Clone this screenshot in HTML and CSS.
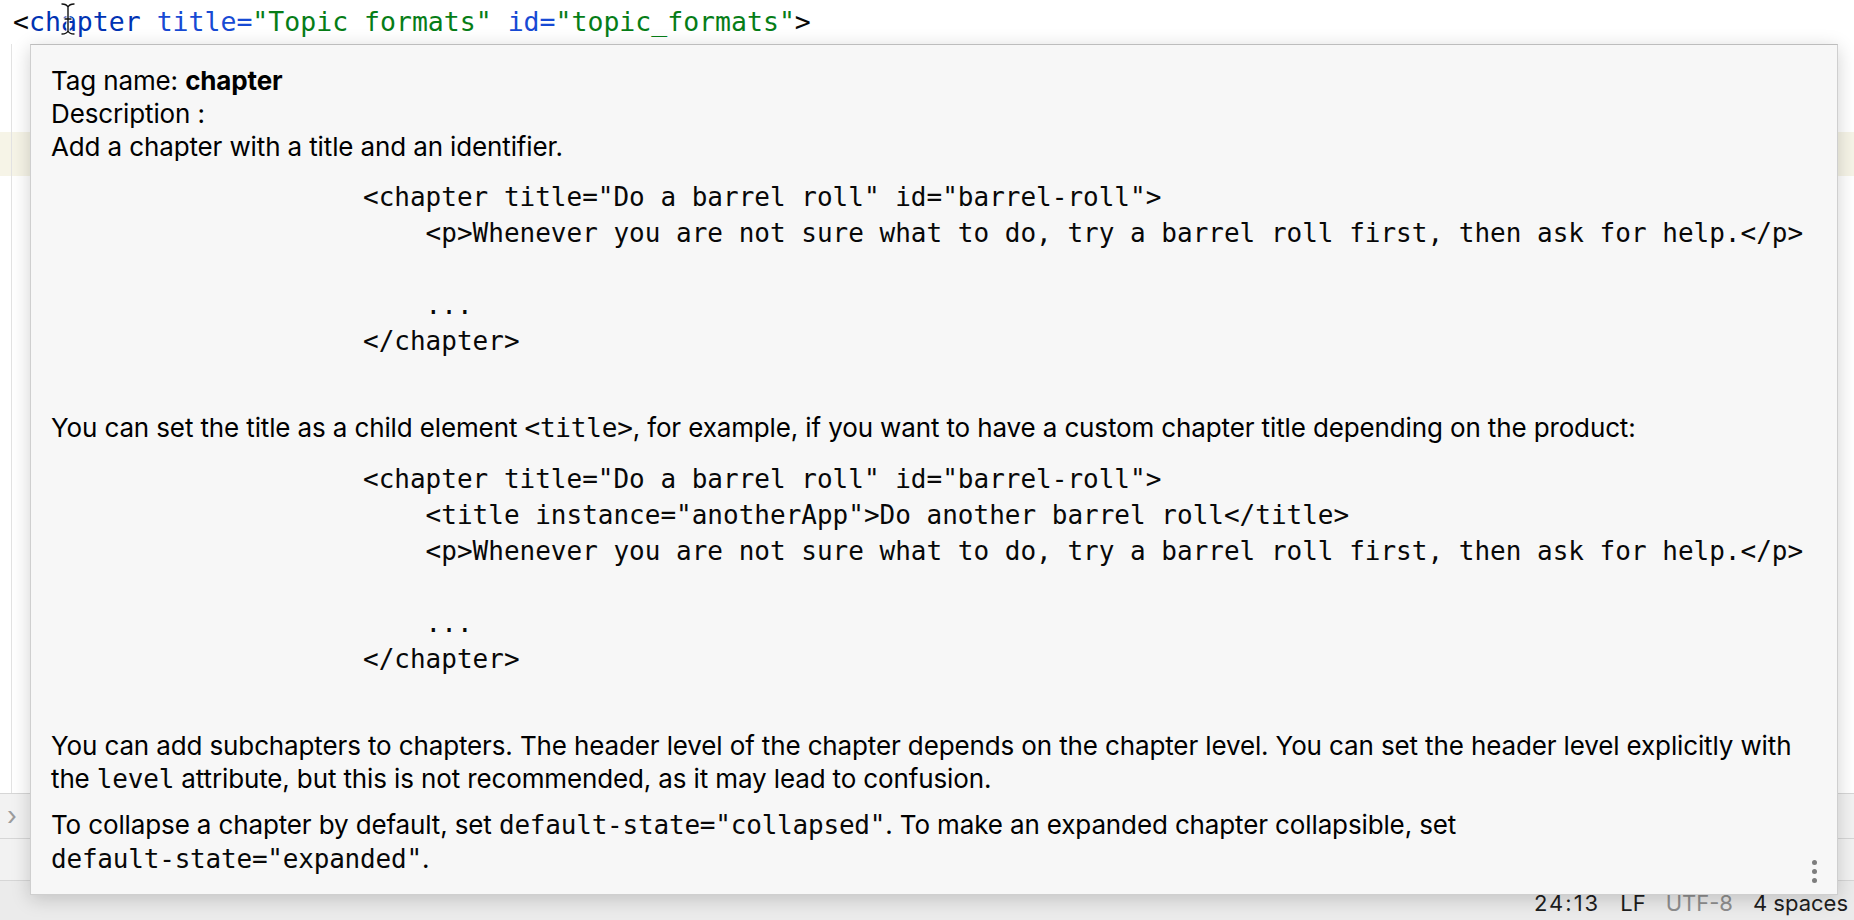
FILE: index.html
```html
<!DOCTYPE html>
<html>
<head>
<meta charset="utf-8">
<link rel="stylesheet" href="styles.css">
</head>
<body>
<div class="window">
  <div class="topline"><span class="punc">&lt;</span><span class="tag">chapter</span> <span class="attr">title=</span><span class="val">"Topic formats"</span> <span class="attr">id=</span><span class="val">"topic_formats"</span><span class="punc">&gt;</span></div>
  <div class="editor">
    <div class="spacer"></div>
    <div class="caretrow"></div>
    <div class="rest"></div>
  </div>
  <div class="navbar"><span class="chev">&#x203A;</span></div>
  <div class="toolbar"></div>
  <div class="status">
    <span class="st pos">24:13</span>
    <span class="st lf">LF</span>
    <span class="st enc">UTF-8</span>
    <span class="st ind">4 spaces</span>
  </div>

  <div class="popup">
    <div class="doc">
      <div class="line">Tag name: <b>chapter</b></div>
      <div class="line">Description :</div>
      <div class="line">Add a chapter with a title and an identifier.</div>
      <pre class="code">&lt;chapter title="Do a barrel roll" id="barrel-roll"&gt;
    &lt;p&gt;Whenever you are not sure what to do, try a barrel roll first, then ask for help.&lt;/p&gt;

    ...
&lt;/chapter&gt;</pre>
      <div class="line">You can set the title as a child element <code>&lt;title&gt;</code>, for example, if you want to have a custom chapter title depending on the product:</div>
      <pre class="code">&lt;chapter title="Do a barrel roll" id="barrel-roll"&gt;
    &lt;title instance="anotherApp"&gt;Do another barrel roll&lt;/title&gt;
    &lt;p&gt;Whenever you are not sure what to do, try a barrel roll first, then ask for help.&lt;/p&gt;

    ...
&lt;/chapter&gt;</pre>
      <div class="para">
        <div class="line">You can add subchapters to chapters. The header level of the chapter depends on the chapter level. You can set the header level explicitly with</div>
        <div class="line">the <code>level</code> attribute, but this is not recommended, as it may lead to confusion.</div>
      </div>
      <div class="para">
        <div class="line">To collapse a chapter by default, set <code>default-state="collapsed"</code>. To make an expanded chapter collapsible, set</div>
        <div class="line"><code>default-state="expanded"</code>.</div>
      </div>
    </div>
    <div class="more"><i></i><i></i><i></i></div>
  </div>

  <svg class="ibeam" width="16" height="34" viewBox="0 0 16 34">
    <path d="M2 2 C5 2 7 3 8 5 C9 3 11 2 14 2 M8 5 V29 M2 32 C5 32 7 31 8 29 C9 31 11 32 14 32 M5 17 H11" fill="none" stroke="#fff" stroke-width="3.2" stroke-linecap="round"/>
    <path d="M2 2 C5 2 7 3 8 5 C9 3 11 2 14 2 M8 5 V29 M2 32 C5 32 7 31 8 29 C9 31 11 32 14 32 M5 17 H11" fill="none" stroke="#111" stroke-width="1.4" stroke-linecap="round"/>
  </svg>
</div>
</body>
</html>
```
FILE: styles.css
```css
* { box-sizing: border-box; }
html, body { margin: 0; padding: 0; }
body {
  width: 1854px;
  height: 920px;
  overflow: hidden;
  background: #ffffff;
  font-family: Inter, "Liberation Sans", sans-serif;
  color: #000;
}
.window {
  position: relative;
  height: 920px;
  display: flex;
  flex-direction: column;
}
.topline {
  height: 44px;
  flex: none;
  padding-left: 13px;
  font-family: "DejaVu Sans Mono", "Liberation Mono", monospace;
  font-size: 26.5px;
  line-height: 44px;
  white-space: pre;
  color: #080808;
}
.topline .tag { color: #0033b3; }
.topline .attr { color: #174ad4; }
.topline .val { color: #067d17; }

.editor {
  flex: 1;
  display: flex;
  flex-direction: column;
  background: linear-gradient(to right, transparent 11px, #e3e3e3 11px, #e3e3e3 12px, transparent 12px);
}
.spacer { height: 88px; flex: none; }
.caretrow {
  height: 44px;
  flex: none;
  background: linear-gradient(to right, transparent 11px, #e3e3e3 11px, #e3e3e3 12px, transparent 12px), #f6f4e7;
}
.rest { flex: 1; }

.navbar {
  height: 45px;
  flex: none;
  border-top: 1px solid #d6d6d6;
  background: #f2f2f2;
  display: flex;
  align-items: center;
  padding-left: 7px;
}
.chev { color: #9c9c9c; font-size: 26px; line-height: 1; }
.toolbar {
  height: 42px;
  flex: none;
  border-top: 1px solid #d6d6d6;
  background: #f2f2f2;
}
.status {
  height: 40px;
  flex: none;
  border-top: 1px solid #d6d6d6;
  background: #ebebeb;
  display: flex;
  justify-content: flex-end;
  align-items: center;
  padding-top: 4px;
  padding-right: 6px;
  font-size: 22px;
  color: #1e1e1e;
}
.st { margin-left: 20px; }
.pos { letter-spacing: 2px; }
.enc { color: #8e8e8e; }

.popup {
  position: absolute;
  left: 30px;
  top: 44px;
  width: 1808px;
  height: 851px;
  background: #f7f7f7;
  border: 1px solid #cfcfcf;
  border-top-color: #bdbdbd;
  box-shadow: 0 4px 18px rgba(0, 0, 0, 0.18);
  padding: 19px 20px 0 20px;
}
.doc { font-size: 26px; line-height: 33px; letter-spacing: -0.13px; }
.line { white-space: nowrap; }
.line b { font-weight: 700; }
.para + .para { margin-top: 12px; }
.code {
  margin: 16px 0 52px;
  padding-left: 312px;
  font-family: "DejaVu Sans Mono", "Liberation Mono", monospace;
  font-size: 26px;
  line-height: 36px;
  letter-spacing: 0;
  color: #080808;
}
code {
  font-family: "DejaVu Sans Mono", "Liberation Mono", monospace;
  font-size: 26px;
  letter-spacing: -0.2px;
  color: #080808;
}
.more {
  position: absolute;
  right: 20px;
  bottom: 11px;
  display: flex;
  flex-direction: column;
  gap: 4px;
}
.more i {
  display: block;
  width: 5px;
  height: 5px;
  border-radius: 50%;
  background: #7d7d7d;
}
.ibeam {
  position: absolute;
  left: 60px;
  top: 2px;
}
```
